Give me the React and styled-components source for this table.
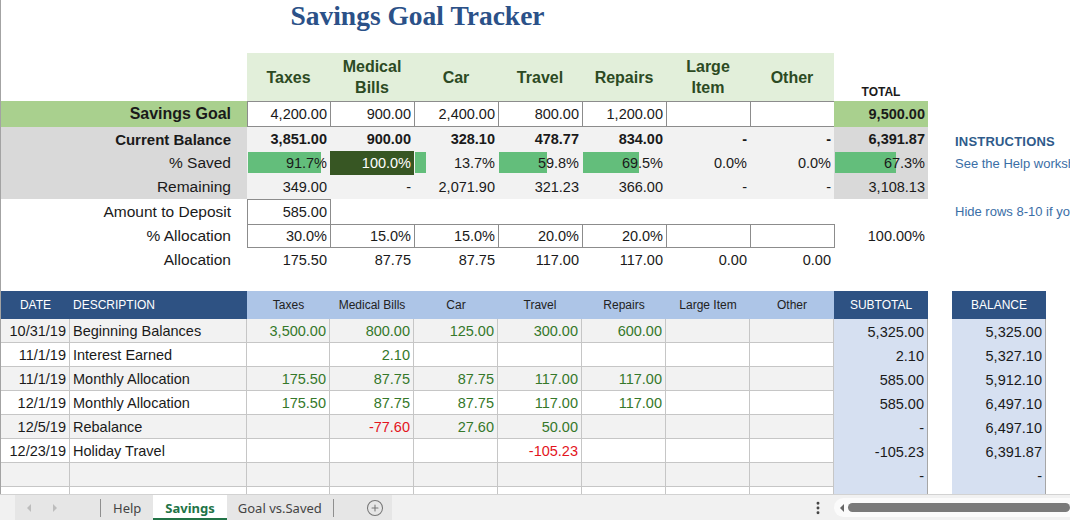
import React from "react";
import styled, { createGlobalStyle, css } from "styled-components";
import { CirclePlus, EllipsisVertical } from "lucide-react";

const COLS = "69px 177px 83px repeat(6, 84px) 94px 24px 94px 1fr";
const SANS = `"Liberation Sans", Arial, sans-serif`;

const HEADS = ["Taxes", "Medical\nBills", "Car", "Travel", "Repairs", "Large\nItem", "Other"];
const CATS = ["Taxes", "Medical Bills", "Car", "Travel", "Repairs", "Large Item", "Other"];
const GOALS = ["4,200.00", "900.00", "2,400.00", "800.00", "1,200.00", "", ""];
const CURRENT = ["3,851.00", "900.00", "328.10", "478.77", "834.00", "-", "-"];
const SAVED = [91.7, 100, 13.7, 59.8, 69.5, 0, 0];
const REMAINING = ["349.00", "-", "2,071.90", "321.23", "366.00", "-", "-"];
const SHARE = ["30.0%", "15.0%", "15.0%", "20.0%", "20.0%", "", ""];
const ALLOCATION = ["175.50", "87.75", "87.75", "117.00", "117.00", "0.00", "0.00"];

const MONTHLY = ["175.50", "87.75", "87.75", "117.00", "117.00", "", ""];
const EMPTY = ["", "", "", "", "", "", ""];
const LEDGER = [
  { date: "10/31/19", desc: "Beginning Balances", vals: ["3,500.00", "800.00", "125.00", "300.00", "600.00", "", ""], sub: "5,325.00", bal: "5,325.00" },
  { date: "11/1/19", desc: "Interest Earned", vals: ["", "2.10", "", "", "", "", ""], sub: "2.10", bal: "5,327.10" },
  { date: "11/1/19", desc: "Monthly Allocation", vals: MONTHLY, sub: "585.00", bal: "5,912.10" },
  { date: "12/1/19", desc: "Monthly Allocation", vals: MONTHLY, sub: "585.00", bal: "6,497.10" },
  { date: "12/5/19", desc: "Rebalance", vals: ["", "-77.60", "27.60", "50.00", "", "", ""], sub: "-", bal: "6,497.10" },
  { date: "12/23/19", desc: "Holiday Travel", vals: ["", "", "", "-105.23", "", "", ""], sub: "-105.23", bal: "6,391.87" },
  { date: "", desc: "", vals: EMPTY, sub: "-", bal: "-" },
  { date: "", desc: "", vals: EMPTY, sub: "", bal: "" },
];

const GlobalStyle = createGlobalStyle`
  html, body {
    margin: 0;
    padding: 0;
    background: #fff;
    overflow: hidden;
  }
  body {
    font-family: ${SANS};
    color: #1a1a1a;
  }
`;

const Page = styled.div`
  width: 1070px;
  height: 520px;
  display: flex;
  flex-direction: column;
  overflow: hidden;
`;

const Sheet = styled.div`
  flex: 1;
  min-height: 0;
  display: flex;
  flex-direction: column;
  border-left: 1px solid #a3a3a3;
  overflow: hidden;
`;

const Row = styled.div`
  flex: none;
  display: grid;
  grid-template-columns: ${COLS};
  height: ${p => p.$h}px;
`;

const Blank = styled.div`
  grid-column: span ${p => p.$span || 1};
`;

const Title = styled.div`
  grid-column: span 9;
  text-align: center;
  padding-top: 0;
  font-family: "Liberation Serif", "Times New Roman", serif;
  font-size: 27.5px;
  line-height: 32px;
  font-weight: 700;
  color: #2b5188;
`;

const HeadCell = styled.div`
  display: flex;
  align-items: center;
  justify-content: center;
  background: #e2efda;
  white-space: pre-line;
  text-align: center;
  font-size: 16px;
  line-height: 21px;
  font-weight: 700;
  color: #2c4a23;
`;

const TotalHead = styled.div`
  display: flex;
  align-items: flex-end;
  justify-content: center;
  padding-bottom: 2px;
  font-size: 12px;
  font-weight: 700;
`;

const SideLabel = styled.div`
  grid-column: span 2;
  display: flex;
  align-items: center;
  justify-content: flex-end;
  padding-right: 16px;
  background: ${p => p.$bg || "transparent"};
  font-size: ${p => p.$size || 15.5}px;
  font-weight: ${p => (p.$bold ? 700 : 400)};
  white-space: nowrap;
`;

const ValueCell = styled.div`
  box-sizing: border-box;
  min-width: 0;
  display: flex;
  align-items: center;
  justify-content: flex-end;
  padding-right: 3px;
  background-color: ${p => p.$bg || "transparent"};
  color: ${p => p.$color || "#1a1a1a"};
  font-size: 14.5px;
  font-weight: ${p => (p.$bold ? 700 : 400)};
  white-space: nowrap;

  ${p =>
    p.$bar > 0 &&
    css`
      background-image: linear-gradient(#63be7b, #63be7b);
      background-repeat: no-repeat;
      background-position: 1px 1px;
      background-size: calc((100% - 3px) * ${p.$bar / 100}) calc(100% - 3px);
    `}
`;

const BoxCell = styled(ValueCell)`
  border: 1px solid #8c8c8c;
  margin-right: -1px;
  background-color: #fff;
  ${p => p.$open && "border-bottom: none;"}
`;

const NoteCell = styled.div`
  display: flex;
  align-items: ${p => (p.$low ? "flex-end" : "center")};
  padding: 0 0 ${p => (p.$low ? 2 : 0)}px 3px;
  font-size: 13px;
  font-weight: ${p => (p.$bold ? 700 : 400)};
  letter-spacing: ${p => (p.$bold ? 0.2 : 0)}px;
  color: ${p => (p.$bold ? "#2f5b8b" : "#3a6ea6")};
  white-space: nowrap;
`;

const DarkHead = styled.div`
  display: flex;
  align-items: center;
  justify-content: ${p => (p.$left ? "flex-start" : "center")};
  padding-left: ${p => (p.$left ? 3 : 0)}px;
  background: #2e5283;
  color: #fff;
  font-size: 12px;
`;

const LightHead = styled.div`
  display: flex;
  align-items: center;
  justify-content: center;
  background: #adc5e7;
  color: #222;
  font-size: 12px;
  white-space: nowrap;
`;

const DataCell = styled.div`
  box-sizing: border-box;
  min-width: 0;
  display: flex;
  align-items: center;
  justify-content: ${p => (p.$left ? "flex-start" : "flex-end")};
  padding: 1px ${p => (p.$left ? 0 : 3)}px 0 ${p => (p.$left ? 3 : 0)}px;
  background: ${p => (p.$alt ? "#f2f2f2" : "#fff")};
  border-right: 1px solid #c6c6c6;
  border-bottom: 1px solid #c6c6c6;
  color: ${p => (p.$tone === "neg" ? "#e3141c" : p.$tone === "pos" ? "#35782a" : "#1a1a1a")};
  font-size: 14.5px;
  white-space: nowrap;
  overflow: hidden;
`;

const SumCell = styled.div`
  box-sizing: border-box;
  display: flex;
  align-items: center;
  justify-content: flex-end;
  padding: 1px 3px 0 0;
  background: #d6e0f1;
  border-right: 1px solid #a6a6a6;
  font-size: 14.5px;
  white-space: nowrap;
`;

const TabBar = styled.div`
  flex: none;
  height: 26px;
  box-sizing: border-box;
  display: flex;
  align-items: stretch;
  background: #f1f1f1;
  border-top: 1px solid #d2d2d2;
  font-family: "Noto Sans", "Open Sans", sans-serif;
  font-size: 13px;
`;

const TabStrip = styled.div`
  display: flex;
  align-items: stretch;
  margin-left: 15px;
  padding-right: 8px;
  background: #e6e6e6;
`;

const NavArrows = styled.div`
  width: 85px;
  display: flex;
  align-items: center;
  gap: 22px;
  padding-left: 12px;
  box-sizing: border-box;
`;

const Arrow = styled.span`
  width: 0;
  height: 0;
  border-top: 4px solid transparent;
  border-bottom: 4px solid transparent;
  ${p => (p.$dir === "left" ? "border-right" : "border-left")}: 4px solid ${p => p.$tint || "#bdbdbd"};
`;

const Sep = styled.span`
  width: 1px;
  height: 18px;
  align-self: center;
  background: #8f8f8f;
`;

const Tab = styled.div`
  display: flex;
  align-items: center;
  padding: 0 ${p => p.$pad || 12}px;
  box-sizing: border-box;
  color: #444;
  white-space: nowrap;

  ${p =>
    p.$active &&
    css`
      background: #fff;
      color: #217346;
      font-weight: 700;
      border-bottom: 2px solid #217346;
      padding-top: 2px;
    `}
`;

const AddButton = styled.div`
  display: flex;
  align-items: center;
  margin-left: 32px;
  color: #777;
`;

const Spacer = styled.div`
  flex: 1;
`;

const MoreDots = styled.div`
  display: flex;
  align-items: center;
  width: 24px;
  color: #444;
`;

const ScrollTrack = styled.div`
  width: 236px;
  margin: 3px 0;
  display: flex;
  align-items: center;
  gap: 4px;
  padding-left: 6px;
  box-sizing: border-box;
  background: #fbfbfb;
  border-radius: 10px 0 0 10px;
`;

const Thumb = styled.div`
  flex: 1;
  height: 9px;
  border-radius: 5px;
  background: #7a7a7a;
`;

function pctLabel(v) {
  return `${v.toFixed(1)}%`;
}

function toneOf(v) {
  if (!v) return undefined;
  return v.startsWith("-") ? "neg" : "pos";
}

function App() {
  return (
    <Page>
      <GlobalStyle />
      <Sheet>
        <Row $h={53}>
          <Title>Savings Goal Tracker</Title>
        </Row>

        <Row $h={48}>
          <Blank $span={2} />
          {HEADS.map(h => (
            <HeadCell key={h}>{h}</HeadCell>
          ))}
          <TotalHead>TOTAL</TotalHead>
        </Row>

        <Row $h={26}>
          <SideLabel $bg='#a9d08e' $bold $size={16}>
            Savings Goal
          </SideLabel>
          {GOALS.map((g, i) => (
            <BoxCell key={i}>{g}</BoxCell>
          ))}
          <ValueCell $bg='#a9d08e' $bold>
            9,500.00
          </ValueCell>
        </Row>

        <Row $h={24}>
          <SideLabel $bg='#d9d9d9' $bold $size={15}>
            Current Balance
          </SideLabel>
          {CURRENT.map((v, i) => (
            <ValueCell key={i} $bg='#f2f2f2' $bold>
              {v}
            </ValueCell>
          ))}
          <ValueCell $bg='#d9d9d9' $bold>
            6,391.87
          </ValueCell>
          <Blank />
          <NoteCell $bold $low>
            INSTRUCTIONS
          </NoteCell>
        </Row>

        <Row $h={24}>
          <SideLabel $bg='#d9d9d9'>% Saved</SideLabel>
          {SAVED.map((v, i) =>
            v >= 100 ? (
              <ValueCell key={i} $bg='#375623' $color='#fff'>
                {pctLabel(v)}
              </ValueCell>
            ) : (
              <ValueCell key={i} $bg='#f2f2f2' $bar={v}>
                {pctLabel(v)}
              </ValueCell>
            )
          )}
          <ValueCell $bg='#d9d9d9' $bar={67.3}>
            67.3%
          </ValueCell>
          <Blank />
          <NoteCell>See the Help worksheet</NoteCell>
        </Row>

        <Row $h={24}>
          <SideLabel $bg='#d9d9d9'>Remaining</SideLabel>
          {REMAINING.map((v, i) => (
            <ValueCell key={i} $bg='#f2f2f2'>
              {v}
            </ValueCell>
          ))}
          <ValueCell $bg='#d9d9d9'>3,108.13</ValueCell>
        </Row>

        <Row $h={25}>
          <SideLabel>Amount to Deposit</SideLabel>
          <BoxCell $open>585.00</BoxCell>
          <Blank $span={8} />
          <NoteCell>Hide rows 8-10 if you</NoteCell>
        </Row>

        <Row $h={24}>
          <SideLabel>% Allocation</SideLabel>
          {SHARE.map((v, i) => (
            <BoxCell key={i}>{v}</BoxCell>
          ))}
          <ValueCell>100.00%</ValueCell>
        </Row>

        <Row $h={24}>
          <SideLabel>Allocation</SideLabel>
          {ALLOCATION.map((v, i) => (
            <ValueCell key={i}>{v}</ValueCell>
          ))}
        </Row>

        <Row $h={19} />

        <Row $h={28}>
          <DarkHead>DATE</DarkHead>
          <DarkHead $left>DESCRIPTION</DarkHead>
          {CATS.map(c => (
            <LightHead key={c}>{c}</LightHead>
          ))}
          <DarkHead>SUBTOTAL</DarkHead>
          <Blank />
          <DarkHead>BALANCE</DarkHead>
        </Row>

        {LEDGER.map((r, i) => (
          <Row $h={24} key={i}>
            <DataCell $alt={i % 2 === 0}>{r.date}</DataCell>
            <DataCell $alt={i % 2 === 0} $left>
              {r.desc}
            </DataCell>
            {r.vals.map((v, j) => (
              <DataCell key={j} $alt={i % 2 === 0} $tone={toneOf(v)}>
                {v}
              </DataCell>
            ))}
            <SumCell>{r.sub}</SumCell>
            <Blank />
            <SumCell>{r.bal}</SumCell>
          </Row>
        ))}
      </Sheet>

      <TabBar>
        <TabStrip>
          <NavArrows>
            <Arrow $dir='left' />
            <Arrow $dir='right' />
          </NavArrows>
          <Sep />
          <Tab>Help</Tab>
          <Tab $active>Savings</Tab>
          <Tab $pad={11}>Goal vs.Saved</Tab>
          <Sep />
          <AddButton>
            <CirclePlus size={18} strokeWidth={1.4} />
          </AddButton>
        </TabStrip>
        <Spacer />
        <MoreDots>
          <EllipsisVertical size={16} strokeWidth={2.4} />
        </MoreDots>
        <ScrollTrack>
          <Arrow $dir='left' $tint='#666' />
          <Thumb />
        </ScrollTrack>
      </TabBar>
    </Page>
  );
}

export default App;
